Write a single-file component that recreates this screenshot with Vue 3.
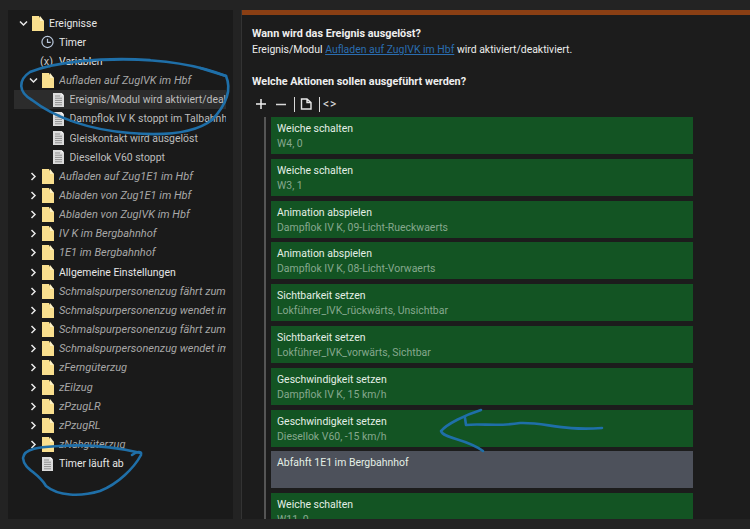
<script setup>
const tree = [
  { t: 'Ereignisse', k: 'folder', d: 1, a: 'open', cls: 'plain' },
  { t: 'Timer', k: 'clock', d: 2, cls: 'plain' },
  { t: 'Variablen', k: 'var', d: 2, cls: 'plain' },
  { t: 'Aufladen auf ZugIVK im Hbf', k: 'folder', d: 2, a: 'open', cls: 'it' },
  { t: 'Ereignis/Modul wird aktiviert/deaktiviert', k: 'doc', d: 3, cls: 'dim', sel: true },
  { t: 'Dampflok IV K  stoppt im Talbahnhof', k: 'doc', d: 3, cls: 'dim' },
  { t: 'Gleiskontakt wird ausgelöst', k: 'doc', d: 3, cls: 'dim' },
  { t: 'Diesellok V60 stoppt', k: 'doc', d: 3, cls: 'dim' },
  { t: 'Aufladen auf Zug1E1 im Hbf', k: 'folder', d: 2, a: 'closed', cls: 'it' },
  { t: 'Abladen von Zug1E1 im Hbf', k: 'folder', d: 2, a: 'closed', cls: 'it' },
  { t: 'Abladen von ZugIVK im Hbf', k: 'folder', d: 2, a: 'closed', cls: 'it' },
  { t: 'IV K im Bergbahnhof', k: 'folder', d: 2, a: 'closed', cls: 'it' },
  { t: '1E1 im Bergbahnhof', k: 'folder', d: 2, a: 'closed', cls: 'it' },
  { t: 'Allgemeine Einstellungen', k: 'folder', d: 2, a: 'closed', cls: 'plain' },
  { t: 'Schmalspurpersonenzug fährt zum Talbahnhof', k: 'folder', d: 2, a: 'closed', cls: 'it' },
  { t: 'Schmalspurpersonenzug wendet im Talbahnhof', k: 'folder', d: 2, a: 'closed', cls: 'it' },
  { t: 'Schmalspurpersonenzug fährt zum Bergbahnhof', k: 'folder', d: 2, a: 'closed', cls: 'it' },
  { t: 'Schmalspurpersonenzug wendet im Bergbahnhof', k: 'folder', d: 2, a: 'closed', cls: 'it' },
  { t: 'zFerngüterzug', k: 'folder', d: 2, a: 'closed', cls: 'it' },
  { t: 'zEilzug', k: 'folder', d: 2, a: 'closed', cls: 'it' },
  { t: 'zPzugLR', k: 'folder', d: 2, a: 'closed', cls: 'it' },
  { t: 'zPzugRL', k: 'folder', d: 2, a: 'closed', cls: 'it' },
  { t: 'zNahgüterzug', k: 'folder', d: 2, a: 'closed', cls: 'it' },
  { t: 'Timer läuft ab', k: 'doc', d: 2, cls: 'plain' },
]
const cards = [
  { h: 'Weiche schalten', s: 'W4, 0' },
  { h: 'Weiche schalten', s: 'W3, 1' },
  { h: 'Animation abspielen', s: 'Dampflok IV K, 09-Licht-Rueckwaerts' },
  { h: 'Animation abspielen', s: 'Dampflok IV K, 08-Licht-Vorwaerts' },
  { h: 'Sichtbarkeit setzen', s: 'Lokführer_IVK_rückwärts, Unsichtbar' },
  { h: 'Sichtbarkeit setzen', s: 'Lokführer_IVK_vorwärts, Sichtbar' },
  { h: 'Geschwindigkeit setzen', s: 'Dampflok IV K, 15 km/h' },
  { h: 'Geschwindigkeit setzen', s: 'Diesellok V60, -15 km/h' },
  { h: 'Abfahft 1E1 im Bergbahnhof', s: '', grey: true },
  { h: 'Weiche schalten', s: 'W11, 0' },
]
</script>

<template>
  <div class="page">
    <aside class="side">
      <div v-for="r in tree" :key="r.t" class="row" :class="['d' + r.d, { sel: r.sel }]">
        <span class="arrow">
          <svg v-if="r.a === 'open'" width="9" height="9" viewBox="0 0 9 9"><path d="M1 2.5 L4.5 6 L8 2.5" fill="none" stroke="#e8e8e8" stroke-width="1.5" /></svg>
          <svg v-else-if="r.a === 'closed'" width="9" height="9" viewBox="0 0 9 9"><path d="M2.5 1 L6 4.5 L2.5 8" fill="none" stroke="#e8e8e8" stroke-width="1.5" /></svg>
        </span>
        <span class="icon">
          <svg v-if="r.k === 'folder'" width="12" height="15" viewBox="0 0 12 15"><path d="M0 0 H7 L8.500 3 L12 5 V15 H0 Z" fill="#f9df8e" /><path d="M8 0 L12 5 H8 Z" fill="#fff3c4" /></svg>
          <svg v-else-if="r.k === 'doc'" width="11" height="14" viewBox="0 0 11 14"><path d="M0 0 H8.500 L11 2.500 V14 H0 Z" fill="#dcdcdc" /><path d="M8.500 0 L11 2.500 H8.500 Z" fill="#ffffff" /><path d="M2 3 H7 M2 5.200 H9 M2 7.400 H9 M2 9.600 H9 M2 11.800 H9" stroke="#8f8f8f" stroke-width="1" /></svg>
          <svg v-else-if="r.k === 'clock'" width="14" height="14" viewBox="0 0 14 14"><circle cx="7" cy="7" r="6" fill="none" stroke="#b9c8dc" stroke-width="1.300" /><path d="M7 3.500 V7.500 H10.500" fill="none" stroke="#b9c8dc" stroke-width="1.300" /></svg>
          <span v-else class="var">(x)</span>
        </span>
        <span class="label" :class="r.cls">{{ r.t }}</span>
      </div>
    </aside>

    <main class="main">
      <div class="accent"></div>
      <div class="content">
        <p class="q">Wann wird das Ereignis ausgelöst?</p>
        <p class="a">Ereignis/Modul <a class="link">Aufladen auf ZugIVK im Hbf</a> wird aktiviert/deaktiviert.</p>
        <p class="q second">Welche Aktionen sollen ausgeführt werden?</p>
        <div class="tools">
          <svg width="12" height="12" viewBox="0 0 12 12"><path d="M6 1 V11 M1 6 H11" stroke="#f0f0f0" stroke-width="1.500" /></svg>
          <svg width="12" height="12" viewBox="0 0 12 12"><path d="M1 6.500 H11" stroke="#d8d8d8" stroke-width="1.500" /></svg>
          <span class="sep"></span>
          <svg width="12" height="12" viewBox="0 0 12 12"><path d="M1.500 1 H7 L11 4.500 V11 H1.500 Z M7 1 V4.500 H11" fill="none" stroke="#e8e8e8" stroke-width="1.400" /></svg>
          <span class="sep"></span>
          <span class="code">&lt;&gt;</span>
        </div>
        <div class="list">
          <div v-for="(c, i) in cards" :key="i" class="card" :class="{ grey: c.grey }">
            <div class="ch">{{ c.h }}</div>
            <div class="cs">{{ c.s }}</div>
          </div>
        </div>
      </div>
    </main>

    <svg class="ink" width="750" height="529" viewBox="0 0 750 529">
      <g fill="none" stroke="#1f6fa8" stroke-width="2.600" stroke-linecap="round" stroke-linejoin="round">
        <path d="M103 60 C150 58 190 62 226 76 C232 90 226 105 212 120 C195 133 165 136 130 133 C90 130 55 118 32 100 C18 92 18 80 30 72 C55 62 100 57 150 60" />
        <path d="M200 68 L226 76" />
        <path d="M60 446 C45 447 24 447 23 458 C24 470 38 472 46 486 C58 496 80 497 100 491 C118 484 134 468 141 455 C142 450 136 452 132 455" />
        <path d="M60 446 C90 444 120 448 141 453" />
        <path d="M481 410 C465 415 447 424 441 431 C444 439 465 438 483 451" />
        <path d="M465 418 L466 425 C480 423 498 427 520 423 C545 422 560 431 602 428" />
      </g>
    </svg>
  </div>
</template>

<style scoped>
.page {
  position: relative;
  width: 750px;
  height: 529px;
  overflow: hidden;
  display: flex;
  gap: 8px;
  box-sizing: border-box;
  padding: 10px 0 10px 8px;
  background: #232323;
  font-family: Roboto, "Noto Sans", sans-serif;
  font-size: 10.450px;
  color: #ececec;
}
.side {
  width: 225px;
  flex: none;
  background: #1a1a1a;
  padding: 3.500px 7px 0 0;
  box-sizing: border-box;
  overflow: hidden;
}
.row {
  display: flex;
  align-items: center;
  height: 19.170px;
  white-space: nowrap;
}
.row.d1 { padding-left: 10px; }
.row.d2 { padding-left: 20px; }
.row.d3 { padding-left: 30.500px; }
.row.sel {
  background: #2c2c2c;
  margin-left: 6px;
  padding-left: 24.500px;
}
.arrow {
  width: 10px;
  flex: none;
  display: flex;
  justify-content: center;
  margin-right: 3px;
}
.icon {
  width: 13px;
  flex: none;
  display: flex;
  justify-content: center;
  align-items: center;
  margin-right: 5px;
}
.var { font-size: 11px; color: #c9c9c9; margin-left: -2px; }
.label { overflow: hidden; flex: 1; min-width: 0; }
.plain { color: #e6e6e6; }
.it { font-style: italic; font-size: 11px; color: #a8a8a8; }
.dim { color: #bdbdbd; }
.main {
  flex: 1;
  min-width: 0;
  background: #1c1c1c;
  border-left: 1px solid #333;
  overflow: hidden;
  display: flex;
  flex-direction: column;
}
.accent { height: 5px; background: #8a3f14; flex: none; }
.content { padding: 11px 0 0 10px; }
.q { margin: 0; font-weight: 700; font-size: 10.850px; line-height: 16px; color: #eeeeee; }
.a { margin: 0; line-height: 16px; }
.second { margin-top: 16px; }
.link { color: #2a6db0; text-decoration: underline; }
.tools {
  display: flex;
  align-items: center;
  gap: 8px;
  height: 20px;
  margin-top: 4px;
  padding-left: 3px;
}
.sep { width: 1px; height: 15px; background: #d8d8d8; margin-left: -1px; margin-right: -3px; }
.code { font-size: 12px; color: #e0e0e0; letter-spacing: 1px; margin-left: -2px; }
.list {
  margin-top: 3px;
  margin-left: 12px;
  border-left: 2px solid #555;
  padding-left: 5px;
  display: flex;
  flex-direction: column;
  gap: 4.800px;
  height: 420px;
}
.card {
  width: 422px;
  height: 37px;
  flex: none;
  box-sizing: border-box;
  padding: 4px 6px 0;
  background: #135423;
}
.card.grey { background: #4d515b; }
.ch { line-height: 15px; color: #e4efe6; }
.cs { line-height: 15px; color: #86a88e; }
.ink {
  position: absolute;
  left: 0;
  top: 0;
  pointer-events: none;
}
</style>
